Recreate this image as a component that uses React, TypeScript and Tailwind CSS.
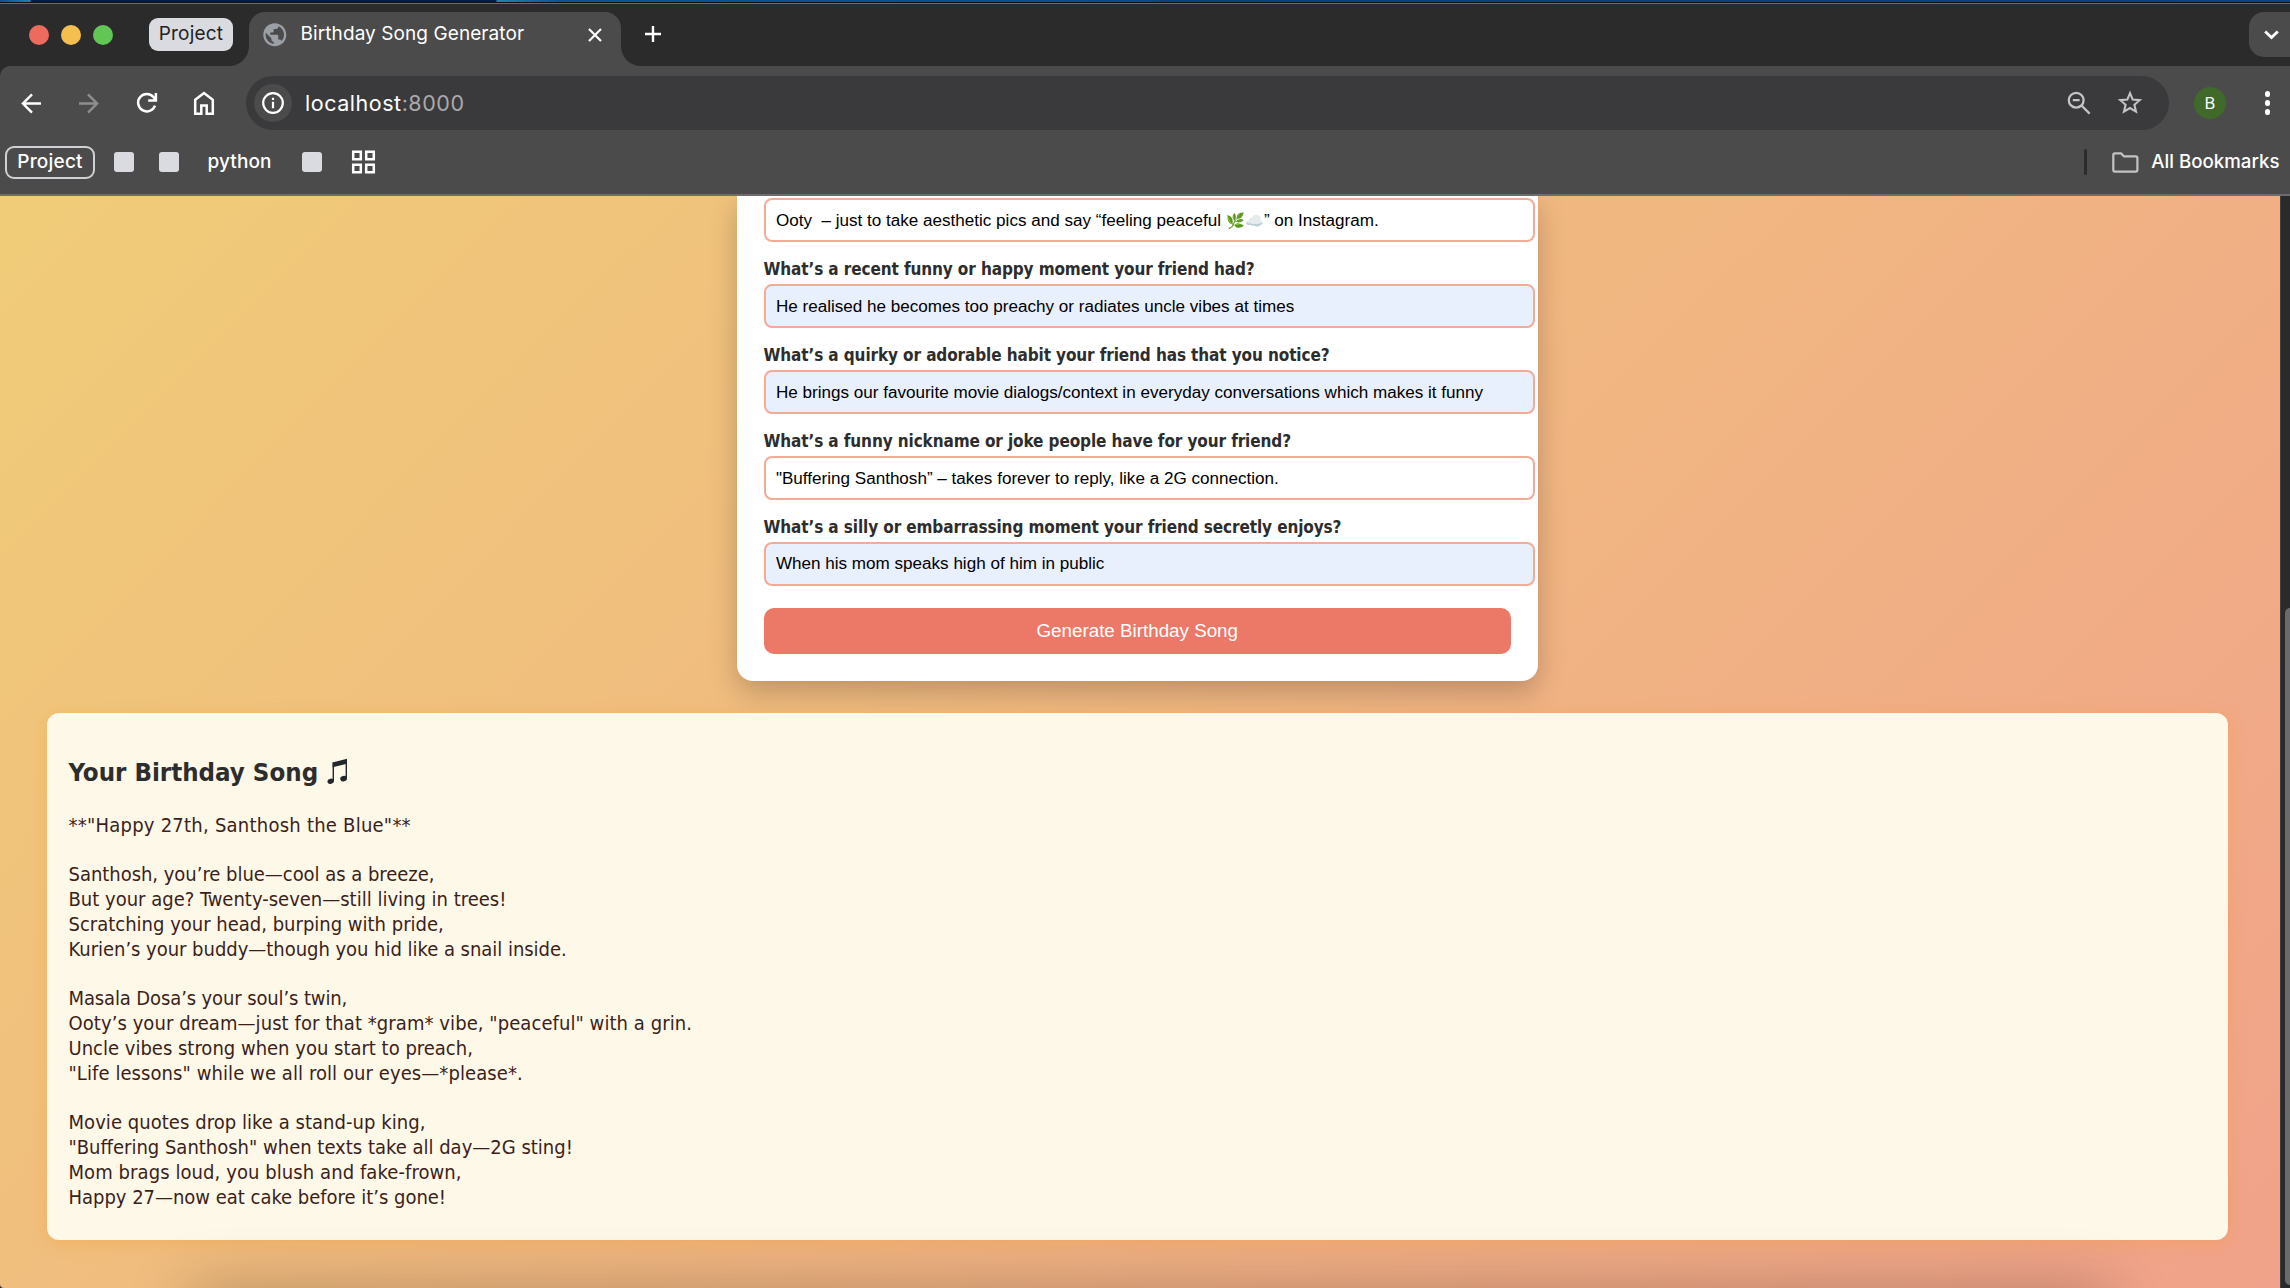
import type { ReactNode } from "react";
import { MdPublic } from "react-icons/md";

type Field = { label?: string; value: ReactNode; filled: boolean };

const fields: Field[] = [
  {
    value: (
      <>
        Ooty&nbsp; – just to take aesthetic pics and say “feeling peaceful{" "}
        <span className="text-[15.2px]">🌿☁️</span>” on Instagram.
      </>
    ),
    filled: false,
  },
  {
    label: "What’s a recent funny or happy moment your friend had?",
    value: "He realised he becomes too preachy or radiates uncle vibes at times",
    filled: true,
  },
  {
    label: "What’s a quirky or adorable habit your friend has that you notice?",
    value: "He brings our favourite movie dialogs/context in everyday conversations which makes it funny",
    filled: true,
  },
  {
    label: "What’s a funny nickname or joke people have for your friend?",
    value: '"Buffering Santhosh” – takes forever to reply, like a 2G connection.',
    filled: false,
  },
  {
    label: "What’s a silly or embarrassing moment your friend secretly enjoys?",
    value: "When his mom speaks high of him in public",
    filled: true,
  },
];

const song: { text: string; tracking: string }[] = [
  { text: '**"Happy 27th, Santhosh the Blue"**', tracking: "tracking-[0.24px]" },
  { text: " ", tracking: "" },
  { text: "Santhosh, you’re blue—cool as a breeze,", tracking: "tracking-[-0.03px]" },
  { text: "But your age? Twenty-seven—still living in trees!", tracking: "" },
  { text: "Scratching your head, burping with pride,", tracking: "" },
  { text: "Kurien’s your buddy—though you hid like a snail inside.", tracking: "tracking-[-0.03px]" },
  { text: " ", tracking: "" },
  { text: "Masala Dosa’s your soul’s twin,", tracking: "tracking-[-0.12px]" },
  { text: 'Ooty’s your dream—just for that *gram* vibe, "peaceful" with a grin.', tracking: "tracking-[0.07px]" },
  { text: "Uncle vibes strong when you start to preach,", tracking: "" },
  { text: '"Life lessons" while we all roll our eyes—*please*.', tracking: "tracking-[0.08px]" },
  { text: " ", tracking: "" },
  { text: "Movie quotes drop like a stand-up king,", tracking: "tracking-[0.05px]" },
  { text: '"Buffering Santhosh" when texts take all day—2G sting!', tracking: "" },
  { text: "Mom brags loud, you blush and fake-frown,", tracking: "tracking-[0.08px]" },
  { text: "Happy 27—now eat cake before it’s gone!", tracking: "tracking-[-0.02px]" },
];

function TabStrip() {
  return (
    <div className="flex h-[62px] items-end bg-[#2b2b2b]">
      <div className="flex h-[62px] w-[249px] items-start pl-[29px] pt-[14px]">
        <div className="flex h-[34px] items-center gap-[12px]">
          <span className="size-5 rounded-full bg-[#ed6a5f]" />
          <span className="size-5 rounded-full bg-[#f5bf50]" />
          <span className="size-5 rounded-full bg-[#62c655]" />
        </div>
        <div className="ml-[36px] flex h-[33px] w-[84px] items-center justify-center rounded-[9px] bg-[#dadbe0] text-[19px] tracking-[0.2px] text-[#222]">
          Project
        </div>
      </div>
      <div className="relative flex h-[54px] w-[372px] items-start rounded-t-[16px] bg-[#4b4b4b]">
        <svg className="absolute bottom-0 -left-5" width="20" height="20" viewBox="0 0 20 20">
          <path d="M20 0V20H0A20 20 0 0 0 20 0Z" fill="#4b4b4b" />
        </svg>
        <svg className="absolute bottom-0 -right-5" width="20" height="20" viewBox="0 0 20 20">
          <path d="M0 0V20H20A20 20 0 0 1 0 0Z" fill="#4b4b4b" />
        </svg>
        <div className="flex h-[45px] w-full items-center pl-[11.5px] pr-[19px]">
          <MdPublic size={27.6} color="#9aa0a6" />
          <span className="ml-[12.5px] text-[19px] tracking-[0.08px] whitespace-nowrap text-white">
            Birthday Song Generator
          </span>
          <svg className="ml-auto" width="14" height="14" viewBox="0 0 14 14" stroke="#fff" strokeWidth="2.2">
            <path d="M1 1L13 13M13 1L1 13" />
          </svg>
        </div>
      </div>
      <svg className="mb-[24px] ml-[24px]" width="16" height="16" viewBox="0 0 16 16" stroke="#fff" strokeWidth="2.4">
        <path d="M8 0V16M0 8H16" />
      </svg>
      <div className="mb-[9px] ml-auto flex h-[45px] w-[41px] items-center rounded-l-[15px] bg-[#4b4b4b] pl-[15px]">
        <svg width="15" height="10" viewBox="0 0 15 10" fill="none" stroke="#fff" strokeWidth="2.8">
          <path d="M1.2 1.4L7.5 7.6L13.8 1.4" />
        </svg>
      </div>
    </div>
  );
}

function Toolbar() {
  return (
    <div className="bg-[#2b2b2b]">
      <div className="flex h-[74px] items-center rounded-tl-[10px] bg-[#4b4b4b]">
        <div className="flex w-[246px] items-center pl-[21px]">
          <svg width="21" height="21" viewBox="0 0 21 21" fill="none" stroke="#fff" strokeWidth="2.4">
            <path d="M20 10.5H2.5M11 1.4L1.9 10.5L11 19.6" />
          </svg>
          <svg className="ml-[36px]" width="21" height="21" viewBox="0 0 21 21" fill="none" stroke="#8e8e8e" strokeWidth="2.4">
            <path d="M1 10.5H18.5M10 1.4L19.1 10.5L10 19.6" />
          </svg>
          <svg className="ml-[37px]" width="22" height="22" viewBox="0 0 22 22" fill="none" stroke="#fff" strokeWidth="2.5">
            <path d="M19 13.6A8.7 8.7 0 1 1 17.6 5.2L19.6 8M19.9 1V8.6H12.2" />
          </svg>
          <svg className="ml-[35px]" width="22" height="25" viewBox="0 0 22 25" fill="none" stroke="#fff" strokeWidth="2.5">
            <path d="M2.2 8.8L11 2L19.8 8.8V22.8H13.7V14.6H8.3V22.8H2.2Z" />
          </svg>
        </div>
        <div className="flex h-[54px] w-[1923px] items-center rounded-full bg-[#3a3a3c] pl-[8px] pr-[26px]">
          <div className="flex size-[38px] items-center justify-center rounded-full bg-[#4b4b4b]">
            <svg width="22" height="22" viewBox="0 0 22 22" fill="none" stroke="#fff" strokeWidth="2.2">
              <circle cx="11" cy="11" r="9.8" />
              <path d="M11 9.8V16.2M11 5.8V8" />
            </svg>
          </div>
          <div className="ml-[13px] text-[21.5px] tracking-[0.53px] text-white">
            localhost<span className="text-[#a9a9ab]">:8000</span>
          </div>
          <svg className="ml-auto" width="24" height="24" viewBox="0 0 24 24" fill="none" stroke="#c4c4c6" strokeWidth="2.3">
            <circle cx="9.2" cy="9.2" r="7.4" />
            <path d="M14.5 14.5L22.6 22.6M5.8 9.2H12.6" />
          </svg>
          <svg className="ml-[26px]" width="26" height="26" viewBox="0 0 26 26" fill="none" stroke="#c4c4c6" strokeWidth="2.1">
            <path d="M13 3.2L15.7 9.6L22.7 10.2L17.4 14.8L19 21.6L13 18L7 21.6L8.6 14.8L3.3 10.2L10.3 9.6Z" />
          </svg>
        </div>
        <div className="ml-[25px] flex size-8 items-center justify-center rounded-full bg-[#41692a] text-[16.5px] text-white">
          B
        </div>
        <div className="ml-[39px] flex flex-col gap-[3.6px]">
          <span className="size-[5.4px] rounded-full bg-white" />
          <span className="size-[5.4px] rounded-full bg-white" />
          <span className="size-[5.4px] rounded-full bg-white" />
        </div>
      </div>
    </div>
  );
}

function BookmarksBar() {
  return (
    <div className="flex h-[54px] items-center bg-[#4b4b4b] pb-[9.5px] pl-[5px] text-[18.7px] font-medium text-white">
      <div className="flex h-[33px] w-[90px] items-center justify-center rounded-[9px] border-2 border-[#d0d1d5] text-[19px] tracking-[0.2px]">
        Project
      </div>
      <span className="ml-[19px] size-5 rounded-[3px] bg-[#dadbe0]" />
      <span className="ml-[25px] size-5 rounded-[3px] bg-[#dadbe0]" />
      <span className="ml-[28.5px] w-[65px] text-[19px] tracking-[0.1px]">python</span>
      <span className="ml-[29px] size-5 rounded-[3px] bg-[#dadbe0]" />
      <svg className="ml-[29px]" width="25" height="24" viewBox="0 0 25 24" fill="none" stroke="#fff" strokeWidth="2.5">
        <path d="M2.2 1.7H9.8V9.3H2.2ZM15.2 1.7H22.8V9.3H15.2ZM2.2 14.7H9.8V22.3H2.2ZM15.2 14.7H22.8V22.3H15.2Z" />
      </svg>
      <span className="ml-auto h-[26px] w-[3px] rounded-full bg-[#2b2b2b]" />
      <svg className="ml-[25px]" width="27" height="21" viewBox="0 0 27 21" fill="none" stroke="#c4c4c6" strokeWidth="2.2" strokeLinejoin="round">
        <path d="M2.8 1.3H9L11.8 4.3H23.6Q25.4 4.3 25.4 6V17.8Q25.4 19.6 23.6 19.6H2.8Q1.3 19.6 1.3 17.8V3Q1.3 1.3 2.8 1.3Z" />
      </svg>
      <span className="mr-[10.5px] ml-[12px] whitespace-nowrap">All Bookmarks</span>
    </div>
  );
}

function FormCard() {
  return (
    <div className="ml-[737px] flex w-[801px] flex-col rounded-b-[16px] bg-white px-[26.5px] pt-[2.2px] pb-[27px] shadow-[0_11px_29px_rgba(0,0,0,0.22)]">
      {fields.map((field, i) => (
        <div key={i}>
          {field.label && (
            <div className="flex h-[41.9px] items-center pt-[14px] font-['DejaVu_Sans_Condensed','DejaVu_Sans',sans-serif] text-[17px] font-bold tracking-[-0.11px] whitespace-nowrap text-[#2d2d2d]">
              {field.label}
            </div>
          )}
          <div
            className={`flex h-[44px] w-[771.5px] items-center rounded-[8px] border-2 border-[#f2ab96] pt-[1px] pl-[10.4px] text-[17.08px] whitespace-pre text-black ${
              field.filled ? "bg-[#e8effd]" : "bg-white"
            }`}
          >
            <span>{field.value}</span>
          </div>
        </div>
      ))}
      <button className="mt-[22px] h-[46.7px] w-[747.5px] rounded-[10px] bg-[#ec7867] text-[18.8px] text-white">
        Generate Birthday Song
      </button>
    </div>
  );
}

function SongCard() {
  return (
    <div className="mt-[31.3px] ml-[47px] h-[527.7px] w-[2180.7px] rounded-[12px] bg-[#fef8e8] px-[21.5px] pt-[43px] font-['DejaVu_Sans_Condensed','DejaVu_Sans',sans-serif] shadow-[0_3px_16px_rgba(240,155,50,0.35)]">
      <h2 className="flex h-8 items-center text-[25.6px] font-bold whitespace-nowrap text-[#2d2d2d]">
        Your Birthday Song
        <svg className="ml-[9px]" width="21" height="27" viewBox="0 0 21 27" fill="#23262b">
          <path d="M5.6 4.4L20 0.8V5.8L5.6 9.2Z" />
          <path d="M5.6 4.4H7V23H5.6ZM18.6 2H20V20.5H18.6Z" />
          <ellipse cx="3.7" cy="23.2" rx="3.3" ry="2.6" transform="rotate(-14 3.7 23.2)" />
          <ellipse cx="16.6" cy="20.6" rx="3.4" ry="2.7" transform="rotate(-14 16.6 20.6)" />
        </svg>
      </h2>
      <div className="mt-[24.8px] text-[20px] leading-[24.82px] whitespace-pre text-[#3b1f1b]">
        {song.map((line, i) => (
          <p key={i} className={line.tracking}>
            {line.text}
          </p>
        ))}
      </div>
    </div>
  );
}

export default function App() {
  return (
    <div className="relative flex h-[1288px] w-[2290px] flex-col overflow-hidden bg-[#262626] font-[Inter,sans-serif]">
      <div className="flex h-[4px] flex-col bg-[linear-gradient(90deg,#0d4f9c_0,#1a86ad_30px,#051d42_31px,#051d42_496px,#1a86ad_497px,#0c529b_560px,#0a4a90_1150px,#0c3f7c_1166px,#0a4288_2290px)] pt-[2px]">
        <div className="h-[2px] border-b border-[#6c6c6c] bg-[#111]" />
      </div>
      <TabStrip />
      <Toolbar />
      <BookmarksBar />
      <div className="h-[2px] bg-[#6d6d6d]" />
      <div className="flex h-[1092px]">
        <main className="h-full w-[2279.5px] overflow-hidden rounded-bl-[4px] bg-[linear-gradient(135deg,#f0cc78,#f1a28a)] font-['Liberation_Sans',Arial,sans-serif]">
          <FormCard />
          <SongCard />
        </main>
        <div className="flex grow justify-end border-l border-[#3c4040] bg-[#2a2a2a] pt-[412px]">
          <div className="h-[677px] w-[5px] rounded-l-[5px] bg-[#6b6b6b]" />
        </div>
      </div>
      {/* shadow of the desktop dock rising over the window's bottom edge */}
      <div className="absolute top-[1294px] left-[190px] h-10 w-[1920px] shadow-[0_0_64px_rgba(0,0,0,0.32)]" />
    </div>
  );
}
